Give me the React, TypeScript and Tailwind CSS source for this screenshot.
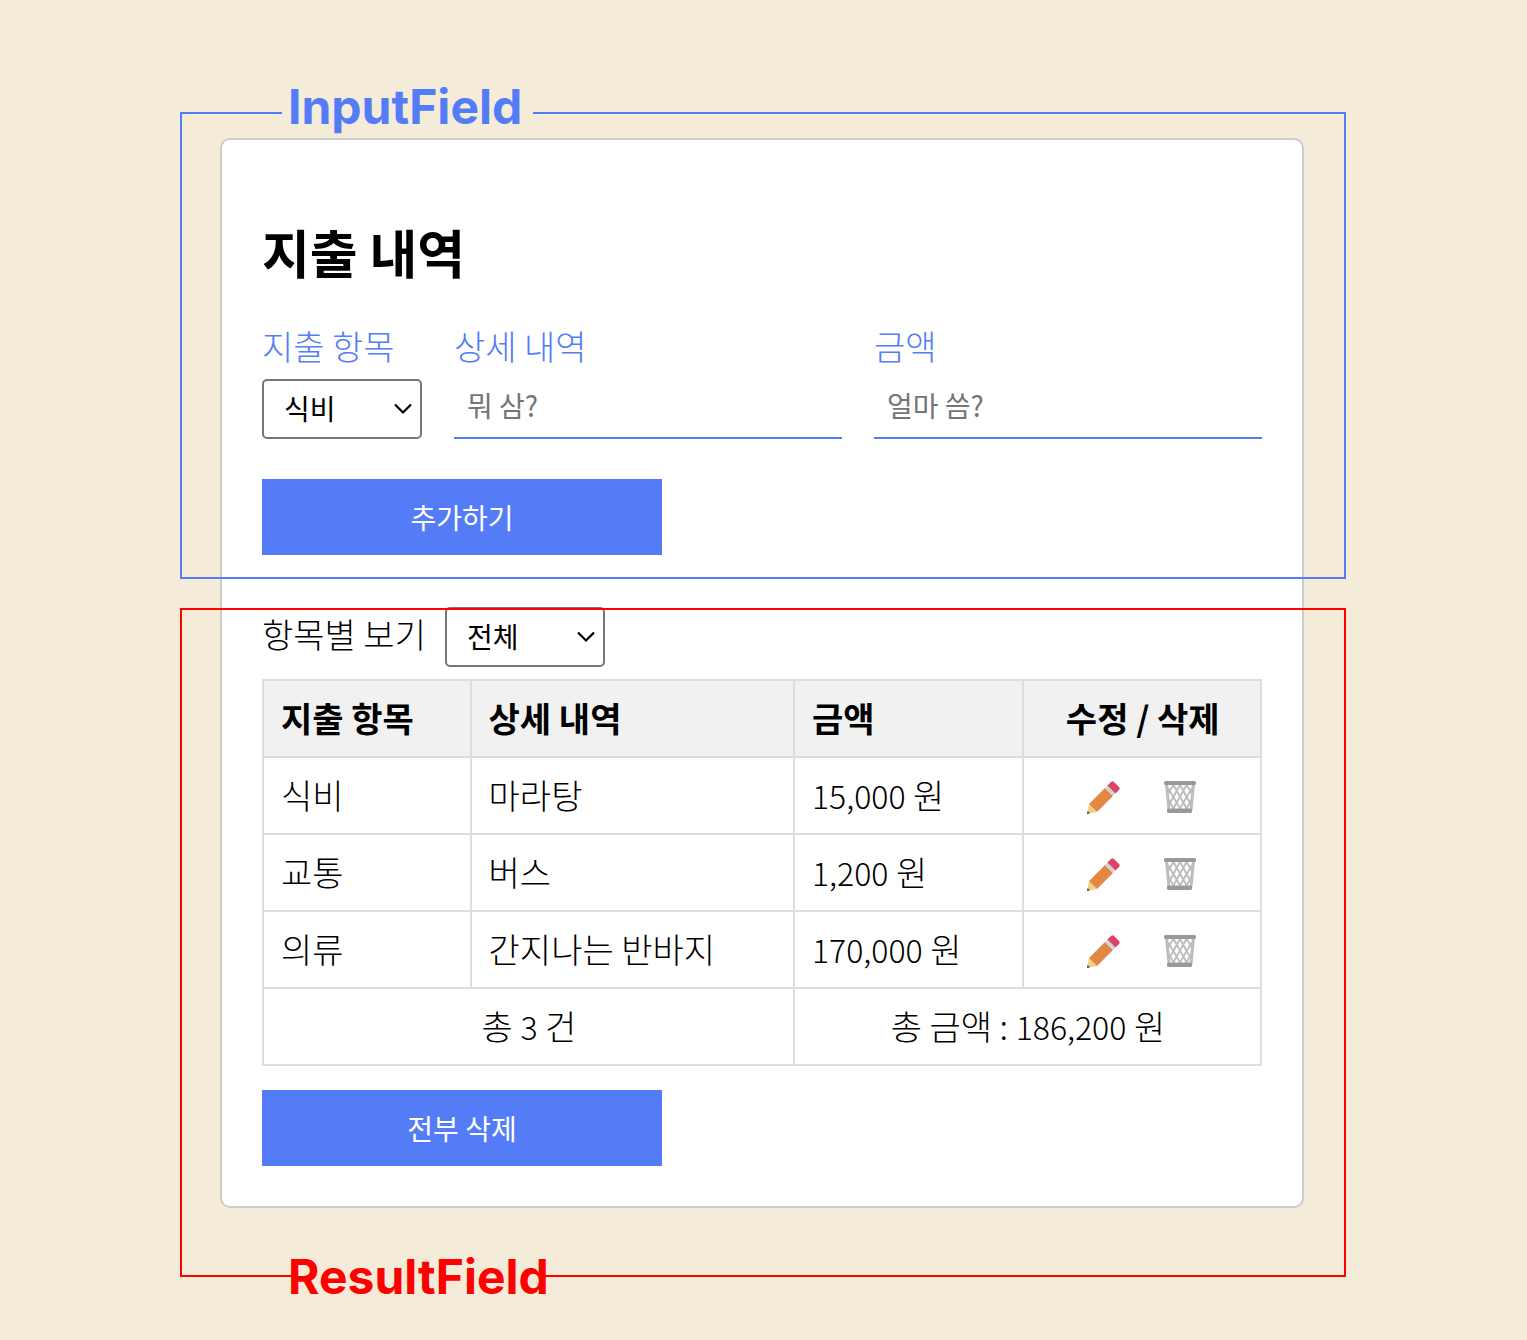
import { useState } from "react";
import type { ReactNode } from "react";

type Expense = { id: number; category: string; detail: string; amount: number };

const CATEGORIES = ["식비", "교통", "의류"];

const INITIAL: Expense[] = [
  { id: 1, category: "식비", detail: "마라탕", amount: 15000 },
  { id: 2, category: "교통", detail: "버스", amount: 1200 },
  { id: 3, category: "의류", detail: "간지나는 반바지", amount: 170000 },
];

const formatWon = (n: number) => n.toString().replace(/\B(?=(\d{3})+$)/g, ",");

function Pencil() {
  return (
    <svg viewBox="0 0 33 33" className="size-[33px]" aria-hidden="true">
      <path d="M0 33 2 23 10 31Z" fill="#f2d08a" />
      <path d="M0 33 .6 30 3 32.3Z" fill="#4a3f45" />
      <path d="M2 23 18 7 26 15 10 31Z" fill="#e38744" />
      <path d="M18 7 20.4 4.6 28.4 12.6 26 15Z" fill="#d4d4d8" />
      <path d="M20.4 4.6 24 1Q25.5-.4 27 1L32 6Q33.4 7.5 32 9L28.4 12.6Z" fill="#db4465" />
    </svg>
  );
}

function Trash() {
  return (
    <svg viewBox="0 0 32 32" className="size-8" aria-hidden="true">
      <g fill="none" stroke="#bdbdbd">
        <path d="M2.5 3 5 29M29.5 3 27 29" strokeWidth="3" />
        <path
          d="M4 13 10 3M5 24 16.500 3M8.500 29 22.500 4M15 29 28 7M21.500 29 28 18M28 13 22 3M27 24 15.500 3M23.500 29 9.500 4M17 29 4 7M10.500 29 4 18"
          strokeWidth="1.9"
        />
      </g>
      <rect x="0" y="0" width="32" height="4" rx="1.500" fill="#999" />
      <rect x="3" y="27.500" width="25" height="4.500" rx="1.500" fill="#999" />
    </svg>
  );
}

function Picker({ id, options, value, onChange }: { id: string; options: string[]; value: string; onChange: (v: string) => void }) {
  return (
    <div className="relative w-40">
      <select
        id={id}
        value={value}
        onChange={(e) => onChange(e.target.value)}
        className="block h-[60px] w-full appearance-none rounded-[5px] border-2 border-[#767676] bg-white pb-[3px] pl-5 text-[28px] leading-10 font-normal text-black"
      >
        {options.map((o) => (
          <option key={o}>{o}</option>
        ))}
      </select>
      <svg viewBox="0 0 18 12" className="pointer-events-none absolute top-6 right-[10px] h-3 w-[18px]" fill="none" stroke="#000" strokeWidth="2.2" aria-hidden="true">
        <path d="M1 1.500 9 9.500 17 1.500" />
      </svg>
    </div>
  );
}

function TextField({ id, label, placeholder }: { id: string; label: string; placeholder: string }) {
  return (
    <div className="flex min-w-0 flex-col gap-[11px]">
      <label htmlFor={id} className="leading-[44px] text-[#537cf6]">{label}</label>
      <input
        id={id}
        placeholder={placeholder}
        className="h-[60px] w-full border-b-2 border-[#537cf6] px-[13px] pb-[6px] text-[28px] leading-10 font-normal outline-none placeholder:text-[#757575]"
      />
    </div>
  );
}

function ActionButton({ children, onClick }: { children: ReactNode; onClick?: () => void }) {
  return (
    <button type="button" onClick={onClick} className="h-[76px] w-[400px] max-w-full bg-[#537cf6] text-[28px] leading-10 font-normal text-white">
      {children}
    </button>
  );
}

function Num({ children }: { children: ReactNode }) {
  return <span className="text-[32px]">{children}</span>;
}

export default function App() {
  const [items, setItems] = useState(INITIAL);
  const [category, setCategory] = useState("식비");
  const [filter, setFilter] = useState("전체");
  const shown = items.filter((i) => filter === "전체" || i.category === filter);
  const total = shown.reduce((sum, i) => sum + i.amount, 0);
  const cell = "h-[77px] border-2 border-[#ddd] pl-[17px] pr-4 pb-px";

  return (
    <main className="min-h-screen bg-[#f4ebd9] pt-[138px] pr-[3px] pb-[132px] font-['Noto_Sans_CJK_KR',sans-serif] text-[34px] font-light text-black">
      <div className="mx-auto w-full max-w-[1084px] rounded-[10px] border-2 border-[#ccc] bg-white p-10">
        <section className="relative">
          <h1 className="pt-10 pb-10 text-[52px] leading-[64px] font-bold">지출 내역</h1>
          <div className="grid grid-cols-[160px_1fr_1fr] gap-8">
            <div className="flex flex-col gap-[11px]">
              <label htmlFor="category" className="leading-[44px] whitespace-nowrap text-[#537cf6]">지출 항목</label>
              <Picker id="category" options={CATEGORIES} value={category} onChange={setCategory} />
            </div>
            <TextField id="detail" label="상세 내역" placeholder="뭐 삼?" />
            <TextField id="amount" label="금액" placeholder="얼마 씀?" />
          </div>
          <div className="flex pt-10">
            <ActionButton>추가하기</ActionButton>
          </div>
          <div className="pointer-events-none absolute -top-[68px] -right-[84px] -bottom-6 -left-[82px] border-2 border-[#537cf6]">
            <span className="absolute -top-[31px] left-[100px] bg-[#f4ebd9] pr-[11px] pl-[6px] font-['Inter',sans-serif] text-5xl leading-[48px] font-bold text-[#537cf6]">InputField</span>
          </div>
        </section>

        <section className="relative mt-[52px]">
          <div className="flex h-[60px] items-center gap-[19px]">
            <label htmlFor="filter" className="pb-[6px] leading-[44px]">항목별 보기</label>
            <Picker id="filter" options={["전체", ...CATEGORIES]} value={filter} onChange={setFilter} />
          </div>
          <table className="mt-3 w-full table-fixed border-collapse leading-[44px]">
            <colgroup>
              <col className="w-[20.8%]" />
              <col className="w-[32.4%]" />
              <col className="w-[23%]" />
              <col />
            </colgroup>
            <thead className="bg-[#f1f1f1]">
              <tr>
                <th className={`${cell} text-left`}>지출 항목</th>
                <th className={`${cell} text-left`}>상세 내역</th>
                <th className={`${cell} text-left`}>금액</th>
                <th className={`${cell} text-center`}>수정 / 삭제</th>
              </tr>
            </thead>
            <tbody>
              {shown.map((item) => (
                <tr key={item.id}>
                  <td className={cell}>{item.category}</td>
                  <td className={cell}>{item.detail}</td>
                  <td className={cell}><Num>{formatWon(item.amount)}</Num> 원</td>
                  <td className={cell}>
                    <div className="flex items-center justify-center gap-11 pt-1 pr-0.5">
                      <button type="button" aria-label="수정">
                        <Pencil />
                      </button>
                      <button type="button" aria-label="삭제" onClick={() => setItems(items.filter((i) => i.id !== item.id))}>
                        <Trash />
                      </button>
                    </div>
                  </td>
                </tr>
              ))}
            </tbody>
            <tfoot>
              <tr>
                <td colSpan={2} className={`${cell} text-center`}>총 <Num>{shown.length}</Num> 건</td>
                <td colSpan={2} className={`${cell} text-center`}>총 금액 : <Num>{formatWon(total)}</Num> 원</td>
              </tr>
            </tfoot>
          </table>
          <div className="flex pt-6">
            <ActionButton onClick={() => setItems([])}>전부 삭제</ActionButton>
          </div>
          <div className="pointer-events-none absolute top-px -right-[84px] -bottom-[111px] -left-[82px] border-2 border-[#ff0000]">
            <span className="absolute -bottom-[26px] left-[106px] isolate font-['Inter',sans-serif] text-5xl leading-[48px] font-bold text-[#ff0000]">
              <span className="absolute inset-x-1 inset-y-0 -z-10 bg-[#f4ebd9]" />
              ResultField
            </span>
          </div>
        </section>
      </div>
    </main>
  );
}
